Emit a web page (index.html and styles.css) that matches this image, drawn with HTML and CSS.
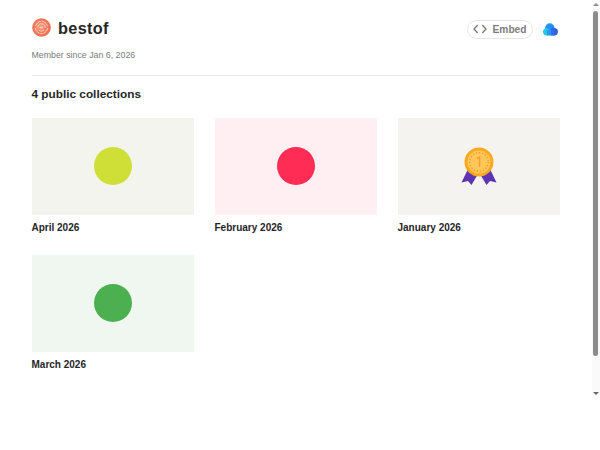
FILE: index.html
```html
<!DOCTYPE html>
<html lang="en">
<head>
<meta charset="utf-8">
<title>bestof</title>
<link rel="stylesheet" href="styles.css">
</head>
<body>
<div class="frame">
  <main class="page">
    <header class="head">
      <div class="identity">
        <div class="name-row">
          <svg class="avatar" viewBox="0 0 20 20" width="19" height="19" aria-hidden="true">
            <defs>
              <radialGradient id="av" cx="0.45" cy="0.45" r="0.6">
                <stop offset="0" stop-color="#f79a7c"/>
                <stop offset="1" stop-color="#ee6449"/>
              </radialGradient>
            </defs>
            <circle cx="10" cy="10" r="9.8" fill="url(#av)"/>
            <path d="M4 8c1.500-3 3-4 5-4.500M11 3.500c2.500.5 4 2 5 4.500M3.500 11c.5 2.500 2 4 4 5M16.500 11c-.5 2.500-2 4-4 5M9 16.500h2M6 10c0-2 1.500-4 4-4s4 2 4 4M7.500 13c1.500 1 3.500 1 5 0M8.500 10c0-1 3-1 3 0s-3 1-3 0Z" fill="none" stroke="#fcd5c4" stroke-width="1" stroke-linecap="round"/>
          </svg>
          <h1 class="name">bestof</h1>
        </div>
        <p class="since">Member since Jan 6, 2026</p>
      </div>
      <div class="actions">
        <button class="embed" type="button">
          <svg class="code" viewBox="0 0 14 10" width="14" height="10" aria-hidden="true">
            <path d="M4.6 1 1 5l3.6 4M9.4 1 13 5 9.4 9" fill="none" stroke="#737373" stroke-width="1.2"/>
          </svg>
          <span>Embed</span>
        </button>
        <svg class="cloud" viewBox="0 0 15 13" width="15" height="13" aria-hidden="true">
          <defs>
            <linearGradient id="cl" x1="0" y1="0" x2="0.3" y2="1">
              <stop offset="0" stop-color="#2a9df4"/>
              <stop offset="1" stop-color="#1f7bf2"/>
            </linearGradient>
          </defs>
          <circle cx="6.800" cy="5" r="4.700" fill="url(#cl)"/>
          <circle cx="3.600" cy="8.800" r="3.600" fill="#25c6e6"/>
          <circle cx="11.200" cy="8.800" r="3.700" fill="#2f5fe6"/>
          <rect x="4" y="7" width="5.500" height="5.500" fill="#1f9bf0"/>
          <rect x="8" y="6.500" width="3.500" height="6" fill="#2f6fe8"/>
        </svg>
      </div>
    </header>
    <hr class="rule">
    <h2 class="count">4 public collections</h2>
    <section class="grid">
      <article class="card">
        <div class="thumb thumb-april"><span class="dot dot-april"></span></div>
        <h3 class="label">April 2026</h3>
      </article>
      <article class="card">
        <div class="thumb thumb-feb"><span class="dot dot-feb"></span></div>
        <h3 class="label">February 2026</h3>
      </article>
      <article class="card">
        <div class="thumb thumb-jan">
          <svg class="medal" viewBox="0 0 36 38" width="36" height="38" aria-hidden="true">
            <path d="M8 20 .5 35.500l6.500-1.500L10.500 38 17 27Z" fill="#5e35b1"/>
            <path d="M28 20l7.500 15.500-6.500-1.500L25.500 38 19 27Z" fill="#5e35b1"/>
            <circle cx="18" cy="15" r="14.500" fill="#ffa81f"/>
            <circle cx="18" cy="15" r="11.500" fill="#ffc65c"/>
            <circle cx="18" cy="15" r="9.300" fill="none" stroke="#f59e0b" stroke-width="1.300" stroke-dasharray="1.300 1.800"/>
            <path d="M16 11.500l2.600-1.500V20" fill="none" stroke="#f5a524" stroke-width="1.500"/>
          </svg>
        </div>
        <h3 class="label">January 2026</h3>
      </article>
      <article class="card">
        <div class="thumb thumb-march"><span class="dot dot-march"></span></div>
        <h3 class="label">March 2026</h3>
      </article>
    </section>
  </main>
  <div class="scrollbar" aria-hidden="true">
    <span class="arrow arrow-up"></span>
    <span class="thumb-bar"></span>
    <span class="arrow arrow-down"></span>
  </div>
</div>
</body>
</html>
```
FILE: styles.css
```css
* { box-sizing: border-box; }
html, body { margin: 0; height: 100%; background: #fff; }
body { font-family: "Liberation Sans", Arial, sans-serif; color: #262626; overflow: hidden; }
.frame { position: relative; width: 600px; height: 400px; }
.page { width: 591px; padding: 17.500px 31.500px 0; }
.head { display: flex; justify-content: space-between; align-items: flex-start; }
.name-row { display: flex; align-items: center; gap: 7.500px; height: 21px; }
.avatar { display: block; margin-top: -2px; }
.name { margin: 0; font-size: 16.300px; line-height: 21px; font-weight: 700; letter-spacing: 0.02em; padding-top: 1px; }
.since { margin: 10px 0 0; font-size: 8.800px; line-height: 12px; color: #7a7a7a; }
.actions { display: flex; align-items: center; gap: 10px; margin-top: 2px; }
.embed { display: flex; align-items: center; gap: 6px; height: 19px; padding: 0 5px 0 5px; background: #fff; border: 1px solid #e6e6e6; border-radius: 10px; font: 700 10.200px "Liberation Sans", Arial, sans-serif; color: #7d7d7d; }
.code, .cloud { display: block; }
.cloud { margin-right: 2px; }
.rule { margin: 14px 0 0; border: 0; border-top: 1px solid #e8e8e8; }
.count { margin: 11px 0 0; font-size: 11.800px; line-height: 15px; font-weight: 700; }
.grid { display: grid; grid-template-columns: repeat(3, 1fr); column-gap: 21px; row-gap: 21px; margin-top: 16px; }
.thumb { display: flex; align-items: center; justify-content: center; height: 97.300px; }
.thumb-april { background: #f3f4ee; }
.thumb-feb { background: #ffeff2; }
.thumb-jan { background: #f4f3ef; }
.thumb-march { background: #f0f7f1; }
.dot { display: block; width: 38px; height: 38px; border-radius: 50%; }
.dot-april { background: #cfdf38; }
.dot-feb { background: #ff2d55; }
.dot-march { background: #4cb050; }
.label { margin: 6px 0 0; font-size: 10px; line-height: 13px; font-weight: 700; }
.scrollbar { position: absolute; top: 0; right: 0; width: 8px; height: 400px; background: #fafafa; display: flex; flex-direction: column; align-items: center; }
.thumb-bar { position: absolute; top: 11px; left: 1px; width: 5px; height: 345px; background: #8c8c8c; border-radius: 3px; }
.arrow { position: absolute; left: 1px; width: 0; height: 0; border-left: 3px solid transparent; border-right: 3px solid transparent; }
.arrow-up { top: 3px; border-bottom: 3px solid #8c8c8c; }
.arrow-down { top: 392px; border-top: 3px solid #666; }
```
